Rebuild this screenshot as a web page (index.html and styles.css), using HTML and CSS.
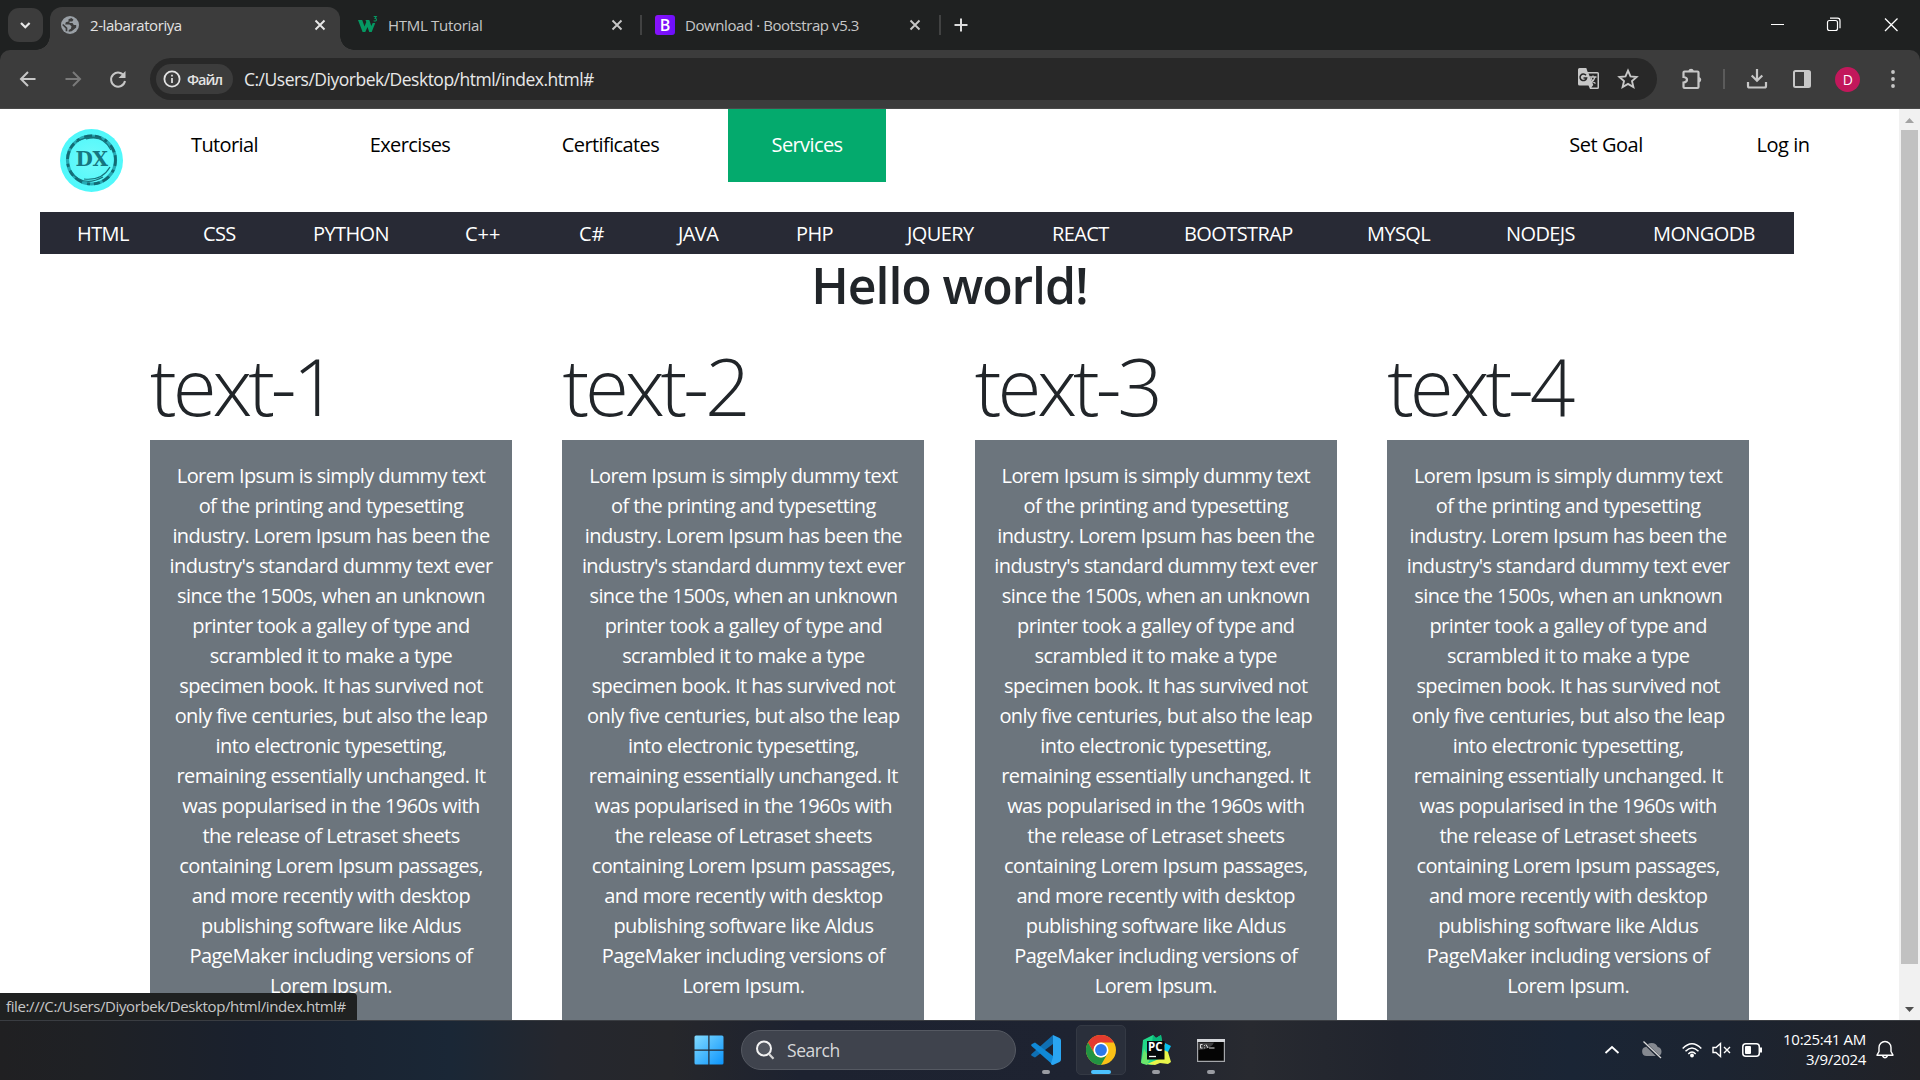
FILE: index.html
```html
<!DOCTYPE html>
<html lang="en">
<head>
<meta charset="utf-8">
<title>2-labaratoriya</title>
<link rel="stylesheet" href="styles.css">
</head>
<body>
<div class="screen">
  <div class="tabstrip">
    <button class="tab-search"><svg width="34" height="34" viewBox="0 0 34 34"><path d="M13 15l4.300 4.300L21.600 15" fill="none" stroke="#e8e8e8" stroke-width="2.200"/></svg></button>
    <div class="tab active">
      <svg class="fav" width="20" height="20" viewBox="0 0 20 20"><circle cx="10" cy="10" r="9" fill="#9aa0a6"/><path d="M11.500 3l-3 1.300v2.200l-2.700.8-.6 2.200h4.300l2 1.800-.6 2.400-2.200 1.400v1.700l3-.5 4.500-3.800v-2.600h-2.400l-1.300-1.800h-3V6.500h2.700l1.300-1.700z" fill="#3c3c3c"/><path d="M2.700 9.500l3.800 3.600v3.200" fill="none" stroke="#3c3c3c" stroke-width="1.700"/></svg>
      <span class="tab-title">2-labaratoriya</span>
      <svg class="close" width="20" height="20" viewBox="0 0 20 20"><path d="M5.500 5.500l9 9m0-9l-9 9" stroke="#e8e8e8" stroke-width="1.900"/></svg>
    </div>
    <div class="tab second">
      <svg class="fav" width="20" height="20" viewBox="0 0 20 20"><path d="M0 5h4.200l2.300 6.500L8.300 7 7.500 5h3.800l2 6 1.400-3h2.600L13.700 17h-2.500L9.500 12 7.300 17H4.600z" fill="#059862"/><path d="M15.700 1.500h2.600L17 3.300q1.700.2 1.500 1.600-.5 1.700-2.900.8" fill="none" stroke="#059862" stroke-width="1.100"/></svg>
      <span class="tab-title">HTML Tutorial</span>
      <svg class="close" width="20" height="20" viewBox="0 0 20 20"><path d="M5.500 5.500l9 9m0-9l-9 9" stroke="#c7c7c7" stroke-width="1.900"/></svg>
    </div>
    <i class="tab-sep"></i>
    <div class="tab third">
      <span class="fav bootstrap">B</span>
      <span class="tab-title">Download · Bootstrap v5.3</span>
      <svg class="close" width="20" height="20" viewBox="0 0 20 20"><path d="M5.500 5.500l9 9m0-9l-9 9" stroke="#c7c7c7" stroke-width="1.900"/></svg>
    </div>
    <i class="tab-sep"></i>
    <svg class="newtab" width="20" height="20" viewBox="0 0 20 20"><path d="M10 3.500v13M3.500 10h13" stroke="#dcdcdc" stroke-width="2"/></svg>
    <div class="window-buttons">
      <svg width="58" height="40" viewBox="0 0 58 40"><path d="M25 19.500h13" stroke="#fff"/></svg>
      <svg width="58" height="40" viewBox="0 0 58 40"><rect x="23.500" y="15.500" width="10" height="10" rx="2" fill="none" stroke="#fff" stroke-width="1.200"/><path d="M26 13.200h7.500q2.500 0 2.500 2.500v7.500" fill="none" stroke="#fff" stroke-width="1.200"/></svg>
      <svg width="58" height="40" viewBox="0 0 58 40"><path d="M23 13.500l12.500 12.500m0-12.500L23 26" stroke="#fff" stroke-width="1.300"/></svg>
    </div>
  </div>

  <div class="toolbar">
    <svg class="nav-icon" width="24" height="24" viewBox="0 0 24 24"><path d="M19.500 12H5.500M12 5l-7 7 7 7" fill="none" stroke="#c7c7c7" stroke-width="2"/></svg>
    <svg class="nav-icon" width="24" height="24" viewBox="0 0 24 24"><path d="M4.500 12h14M12 5l7 7-7 7" fill="none" stroke="#7a7a7a" stroke-width="2"/></svg>
    <svg class="nav-icon" width="24" height="24" viewBox="0 0 24 24"><path d="M18.400 9.500A7 7 0 1 0 19 14" fill="none" stroke="#c7c7c7" stroke-width="2"/><path d="M19.500 4v7h-7z" fill="#c7c7c7"/></svg>
    <div class="omnibox">
      <span class="chip"><svg width="18" height="18" viewBox="0 0 18 18"><circle cx="9" cy="9" r="7.600" fill="none" stroke="#e3e3e3" stroke-width="1.800"/><path d="M9 8v5M9 4.800v1.800" stroke="#e3e3e3" stroke-width="1.700"/></svg><span>Файл</span></span>
      <span class="url">C:/Users/Diyorbek/Desktop/html/index.html#</span>
      <svg class="translate" width="22" height="22" viewBox="0 0 22 22"><path d="M1.500 0h6.800l1.400 4H19.500q1.500 0 1.500 1.500v14q0 1.500-1.500 1.500H12l-1.500-3.500h-9Q0 17.500 0 16V1.500Q0 0 1.500 0z" fill="#c7c7c7"/><path d="M10.500 5.500h9v14h-6.200l2-2.500z" fill="#282828"/><path d="M8 7.300A3.300 3.300 0 1 0 8.600 10H5.500" fill="none" stroke="#282828" stroke-width="1.500"/><path d="M11.500 9h7M15 7.500V9M17 9q-1 4-4.500 6M13 10q1 3.500 4.500 5.500" fill="none" stroke="#c7c7c7" stroke-width="1.300"/></svg>
      <svg width="22" height="22" viewBox="0 0 22 22"><path d="M11 2.700l2.500 5.700 6.100.6-4.600 4.100 1.400 6-5.400-3.200-5.400 3.200 1.400-6L2.400 9l6.100-.6z" fill="none" stroke="#c7c7c7" stroke-width="1.900"/></svg>
    </div>
    <svg class="puzzle" width="24" height="24" viewBox="0 0 24 24"><path d="M3.500 5.500q0-1 1-1h13q1 0 1 1V20q0 1-1 1h-13q-1 0-1-1v-4.500q3.500-.5 3.500-2.800T3.500 10z" fill="none" stroke="#c7c7c7" stroke-width="2.200"/><path d="M8.300 4a2.800 2.800 0 0 1 5.500 0zM19 10a2.800 2.800 0 0 1 0 5.500z" fill="#c7c7c7"/></svg>
    <i class="tool-sep"></i>
    <svg class="download" width="22" height="22" viewBox="0 0 22 22"><path d="M11 1v11M5.700 7.500L11 12.800l5.300-5.300M2 14v4q0 1.500 1.500 1.500h15Q20 19.500 20 18v-4" fill="none" stroke="#c7c7c7" stroke-width="2.200"/></svg>
    <svg class="panel" width="20" height="20" viewBox="0 0 20 20"><rect x="2" y="2" width="16" height="16" rx="1.500" fill="none" stroke="#c7c7c7" stroke-width="2"/><path d="M12 2h6v16h-6z" fill="#c7c7c7"/></svg>
    <span class="avatar">D</span>
    <svg class="dots" width="6" height="20" viewBox="0 0 6 20"><g fill="#c7c7c7"><circle cx="3" cy="3" r="1.900"/><circle cx="3" cy="10" r="1.900"/><circle cx="3" cy="17" r="1.900"/></g></svg>
  </div>

  <div class="viewport">
    <div class="page">
      <header class="header">
        <svg class="logo" width="63" height="63" viewBox="0 0 63 63">
          <defs><radialGradient id="sea"><stop offset="0" stop-color="#72fafa"/><stop offset="1" stop-color="#4ff8fb"/></radialGradient></defs>
          <circle cx="31.500" cy="31.500" r="31.500" fill="url(#sea)"/>
          <g fill="none">
            <ellipse cx="31.500" cy="31" rx="24" ry="24" stroke="#26aab4" stroke-width="3.200"/>
            <ellipse cx="31.500" cy="31" rx="24" ry="24" stroke="#136a74" stroke-width="2.800" stroke-dasharray="6 4 3 5 8 3"/>
            <path d="M26 10q17-5 25 11M10 42q13 17 33 6M24 50q18 2 26-12M16 13q14-8 26-3" stroke="#17737c" stroke-width="1.200"/>
          </g>
          <text x="31.500" y="37" class="logo-text">DX</text>
        </svg>
        <nav class="menu">
          <a class="w155">Tutorial</a><a class="w166">Exercises</a><a class="w185">Certificates</a><a class="w158 current">Services</a>
        </nav>
        <nav class="menu account">
          <a class="w162">Set Goal</a><a class="w142">Log in</a>
        </nav>
      </header>
      <nav class="topics">
        <a>HTML</a><a>CSS</a><a>PYTHON</a><a class="wide">C++</a><a class="wide">C#</a><a>JAVA</a><a>PHP</a><a>JQUERY</a><a>REACT</a><a>BOOTSTRAP</a><a>MYSQL</a><a>NODEJS</a><a>MONGODB</a>
      </nav>
      <h1>Hello world!</h1>
      <main class="columns">
        <section><h2>text-1</h2><p>Lorem Ipsum is simply dummy text<br>of the printing and typesetting<br>industry. Lorem Ipsum has been the<br>industry's standard dummy text ever<br>since the 1500s, when an unknown<br>printer took a galley of type and<br>scrambled it to make a type<br>specimen book. It has survived not<br>only five centuries, but also the leap<br>into electronic typesetting,<br>remaining essentially unchanged. It<br>was popularised in the 1960s with<br>the release of Letraset sheets<br>containing Lorem Ipsum passages,<br>and more recently with desktop<br>publishing software like Aldus<br>PageMaker including versions of<br>Lorem Ipsum.</p></section>
        <section><h2>text-2</h2><p>Lorem Ipsum is simply dummy text<br>of the printing and typesetting<br>industry. Lorem Ipsum has been the<br>industry's standard dummy text ever<br>since the 1500s, when an unknown<br>printer took a galley of type and<br>scrambled it to make a type<br>specimen book. It has survived not<br>only five centuries, but also the leap<br>into electronic typesetting,<br>remaining essentially unchanged. It<br>was popularised in the 1960s with<br>the release of Letraset sheets<br>containing Lorem Ipsum passages,<br>and more recently with desktop<br>publishing software like Aldus<br>PageMaker including versions of<br>Lorem Ipsum.</p></section>
        <section><h2>text-3</h2><p>Lorem Ipsum is simply dummy text<br>of the printing and typesetting<br>industry. Lorem Ipsum has been the<br>industry's standard dummy text ever<br>since the 1500s, when an unknown<br>printer took a galley of type and<br>scrambled it to make a type<br>specimen book. It has survived not<br>only five centuries, but also the leap<br>into electronic typesetting,<br>remaining essentially unchanged. It<br>was popularised in the 1960s with<br>the release of Letraset sheets<br>containing Lorem Ipsum passages,<br>and more recently with desktop<br>publishing software like Aldus<br>PageMaker including versions of<br>Lorem Ipsum.</p></section>
        <section><h2>text-4</h2><p>Lorem Ipsum is simply dummy text<br>of the printing and typesetting<br>industry. Lorem Ipsum has been the<br>industry's standard dummy text ever<br>since the 1500s, when an unknown<br>printer took a galley of type and<br>scrambled it to make a type<br>specimen book. It has survived not<br>only five centuries, but also the leap<br>into electronic typesetting,<br>remaining essentially unchanged. It<br>was popularised in the 1960s with<br>the release of Letraset sheets<br>containing Lorem Ipsum passages,<br>and more recently with desktop<br>publishing software like Aldus<br>PageMaker including versions of<br>Lorem Ipsum.</p></section>
      </main>
    </div>
    <div class="scrollbar">
      <svg width="21" height="21" viewBox="0 0 21 21"><path d="M6 14l4.500-5 4.500 5z" fill="#a3a3a3"/></svg>
      <i class="thumb"></i>
      <svg width="21" height="21" viewBox="0 0 21 21"><path d="M6 8l4.500 5L15 8z" fill="#505050"/></svg>
    </div>
    <div class="status">file:///C:/Users/Diyorbek/Desktop/html/index.html#</div>
  </div>

  <div class="taskbar">
    <svg class="start" width="30" height="30" viewBox="0 0 30 30"><defs><linearGradient id="win" x1="0" y1="0" x2="30" y2="30" gradientUnits="userSpaceOnUse"><stop offset="0" stop-color="#84dcff"/><stop offset="1" stop-color="#0a93fb"/></linearGradient></defs><path d="M2 .5h12.300v14H.5V2Q.5.500 2 .5zM15.500.500H28q1.500 0 1.500 1.500v12.500h-14zM.5 15.700h13.800V29.500H2Q.5 29.500.5 28zM15.500 15.700h14V28q0 1.500-1.500 1.500H15.500z" fill="url(#win)"/></svg>
    <div class="search"><svg width="22" height="22" viewBox="0 0 22 22"><circle cx="10" cy="9.500" r="7" fill="#52565f" stroke="#f2f2f2" stroke-width="2"/><path d="M15 15l4.500 4.800" stroke="#d5d5d5" stroke-width="2.200"/></svg><span>Search</span></div>
    <div class="app"><svg width="30" height="30" viewBox="0 0 30 30"><path d="M22 0v9L4 22.500.6 20.700Q-.3 19.800.8 18.700z" fill="#0f6fb3"/><path d="M22 30v-9L4 7.500.6 9.300Q-.3 10.200.8 11.300z" fill="#1089d6"/><path d="M22 0l6.500 3q1.500.8 1.500 2.500v19q0 1.700-1.500 2.500L22 30q-1 0-2.200-1L22 22z" fill="#2aa5f2"/></svg><i></i></div>
    <div class="app open"><svg width="30" height="30" viewBox="0 0 30 30"><circle cx="15" cy="15" r="15" fill="#fbc116"/><path d="M2 7.500A15 15 0 0 1 28 7.500H15a7.500 7.500 0 0 0-6.500 11.200z" fill="#e33b2e"/><path d="M2 7.500L8.500 18.750A7.500 7.500 0 0 0 21.500 18.750L15 30A15 15 0 0 1 2 7.500z" fill="#229342"/><circle cx="15" cy="15" r="7.500" fill="#fff"/><circle cx="15" cy="15" r="5.900" fill="#2b78ea"/></svg><i></i></div>
    <div class="app"><svg width="30" height="30" viewBox="0 0 30 30"><path d="M2 5l10-5 3 3 5-3 1 6 3 8-9 14-4 2-9-1-2-2z" fill="#21d789"/><path d="M12 0l3 3 5-3 1 8H11z" fill="#09b87b"/><path d="M0 28l3-14 6 10-3 6z" fill="#6be66b"/><path d="M22 9l5 2 0 6 3 10-3 2-8-1-5 2-8-1 14-6z" fill="#e8f54a"/><path d="M24 8l6 3-3 6-4-2z" fill="#07c3f2"/><path d="M6 6h17.500V24.500H6z" fill="#05090a"/><path d="M8 21.500h7" stroke="#fff" stroke-width="1.300"/><text x="7" y="15.500" class="pc">PC</text></svg><i></i></div>
    <div class="app"><svg width="28" height="23" viewBox="0 0 28 23"><path d="M.6.600h26.800v21.800H.6z" fill="#050505" stroke="#a4a6aa" stroke-width="1.200"/><path d="M1 3.500V11q14-1 16-7.500z" fill="#3d3d3f"/><path d="M0 0h28v3H0z" fill="#d4d6da"/><path d="M5.500 5.500h-2v3.500h2M7.500 6v.8M7.500 8.500v.8M9 5.500l2 3.500M12 9h5.500" stroke="#ddd" fill="none"/></svg><i></i></div>
    <div class="tray">
      <svg class="up" width="16" height="10" viewBox="0 0 16 10"><path d="M1.500 8L8 2l6.500 6" fill="none" stroke="#fff" stroke-width="1.800"/></svg>
      <svg class="cloud" width="22" height="18" viewBox="0 0 22 18"><path d="M5.500 15a4.500 4.500 0 0 1-.8-8.900A6.500 6.500 0 0 1 16.700 6a4.600 4.600 0 0 1 .3 9z" fill="#858990"/><path d="M3 1.500L19.500 17.500" stroke="#1b2330" stroke-width="3"/><path d="M2.500.5L20 17" stroke="#ddd" stroke-width="1.200"/></svg>
      <svg class="wifi" width="20" height="16" viewBox="0 0 20 16"><g fill="none" stroke="#fff" stroke-width="1.500"><path d="M.7 6.500q9.300-9.500 18.600 0M3.500 9.300q6.500-6.700 13 0M6.300 12q3.700-3.800 7.400 0"/></g><circle cx="10" cy="13.500" r="1.900" fill="#fff"/></svg>
      <svg class="volume" width="20" height="16" viewBox="0 0 20 16"><path d="M1 5.500h3L8.500 1.500v13L4 10.500H1z" fill="none" stroke="#fff" stroke-width="1.400"/><path d="M12 5l6 6m0-6l-6 6" stroke="#fff" stroke-width="1.400"/></svg>
      <svg class="battery" width="21" height="14" viewBox="0 0 21 14"><rect x=".8" y=".8" width="16.500" height="12.400" rx="3" fill="none" stroke="#fff" stroke-width="1.500"/><rect x="3" y="3" width="6" height="8" rx="1" fill="#fff"/><path d="M19 4.500v5" stroke="#fff" stroke-width="2"/></svg>
      <div class="clock">10:25:41 AM<br>3/9/2024</div>
      <svg class="bell" width="18" height="20" viewBox="0 0 18 20"><path d="M1 15.200l2-3.700V7.500a6 6 0 0 1 12 0v4l2 3.700zM6.500 16q2.500 3.500 5 0" fill="none" stroke="#fff" stroke-width="1.400" stroke-linejoin="round"/></svg>
    </div>
  </div>
</div>
</body>
</html>
```
FILE: styles.css
```css
* { box-sizing: border-box; }
body { margin: 0; font-family: "Open Sans", "Noto Sans", sans-serif; letter-spacing: -0.45px; overflow: hidden; }
svg { display: block; flex: none; }
.screen { width: 1920px; height: 1080px; display: flex; flex-direction: column; background: #1f2121; }

/* Tab strip */
.tabstrip { height: 50px; display: flex; align-items: center; padding-left: 8px; background: #1f2121; }
.tab-search { width: 35px; height: 34px; border: 0; border-radius: 11px; padding: 0; background: #3c3c3c; margin-right: 7px; }
.tab { height: 43px; margin-top: 7px; padding: 0 10px 7px 18px; display: flex; align-items: center; position: relative; color: #c7c7c7; }
.tab.active { width: 290px; padding-left: 10px; background: #3c3c3c; border-radius: 12px 12px 0 0; color: #e3e3e3; }
.tab.active::before, .tab.active::after { content: ""; position: absolute; bottom: 0; width: 14px; height: 14px; }
.tab.active::before { left: -14px; background: radial-gradient(circle at 0 0, transparent 13.500px, #3c3c3c 14px); }
.tab.active::after { right: -14px; background: radial-gradient(circle at 100% 0, transparent 13.500px, #3c3c3c 14px); }
.tab.second { width: 300px; padding-right: 13px; }
.tab.third { width: 297px; padding-left: 13px; padding-right: 14px; }
.tab .fav { margin-right: 10px; }
.bootstrap { width: 20px; height: 20px; border-radius: 3px; background: linear-gradient(100deg, #8b12fb, #6a0ffb); color: #fff; font: 600 16px/20px "Open Sans", sans-serif; text-align: center; letter-spacing: 0; }
.tab-title { font-size: 15px; line-height: 20px; flex: 1; white-space: nowrap; letter-spacing: -0.42px; }
.second .tab-title { letter-spacing: -0.3px; }
.tab-sep { width: 2px; height: 20px; background: #414242; }
.newtab { margin-left: 10px; }
.window-buttons { display: flex; margin-left: auto; height: 50px; align-items: center; }

/* Toolbar */
.toolbar { height: 59px; background: #3c3c3c; border-bottom: 1px solid #4a4a4a; border-radius: 10px 10px 0 0; display: flex; align-items: center; padding-left: 16px; }
.nav-icon { margin-right: 21px; }
.nav-icon + .omnibox { margin-left: -1px; }
.omnibox { width: 1507px; height: 42px; border-radius: 21px; background: #282828; display: flex; align-items: center; padding: 0 18px 0 6px; }
.chip { width: 77px; height: 30px; border-radius: 15px; background: #3c3c3c; display: flex; align-items: center; gap: 6px; padding-left: 7px; color: #e3e3e3; font-weight: 600; font-size: 14.500px; letter-spacing: -1px; }
.url { margin-left: 11px; font-size: 17.500px; color: #e8e8e8; flex: 1; letter-spacing: -0.5px; }
.translate { margin-right: 17px; }
.puzzle { margin-left: 23px; }
.tool-sep { width: 2px; height: 20px; margin: 0 21px 0 19px; background: #5b5b5b; }
.panel { margin-left: 24px; }
.avatar { width: 25px; height: 25px; margin: 0 30px 0 23px; border-radius: 50%; background: #c2185b; color: #fff; font-size: 14px; line-height: 25px; text-align: center; }

/* Web page */
.viewport { height: 911px; display: flex; position: relative; overflow: hidden; background: #fff; }
.page { width: 1899px; flex: none; }
.header { height: 103px; display: flex; padding: 0 45px 0 60px; }
.logo { margin: 20px 24px 0 0; }
.logo-text { font: 700 20px "DejaVu Serif", serif; text-anchor: middle; fill: #167580; letter-spacing: -0.5px; }
.menu { display: flex; gap: 25px; font-size: 20px; letter-spacing: -0.6px; }
.menu a { height: 73px; padding-top: 21px; line-height: 30px; text-align: center; color: #000; }
.menu .current { background: #04aa6d; color: #fff; }
.account { margin-left: auto; letter-spacing: -0.45px; }
.w155 { width: 155px; } .w166 { width: 166px; } .w185 { width: 185px; } .w158 { width: 158px; }
.w162 { width: 162px; } .w142 { width: 142px; }
.topics { width: 1754px; height: 42px; margin-left: 40px; padding: 1px 0 0 37px; background: #282a35; color: #fff; display: grid; grid-template-columns: 126px 110px 152px 114px 99px 118px 111px 145px 132px 183px 139px 147px 110px; font-size: 20px; line-height: 42px; letter-spacing: -0.6px; }
.topics .wide { letter-spacing: 0; }
h1 { margin: 0; padding-top: 1px; height: 83px; font-size: 50px; line-height: 60px; font-weight: 600; text-align: center; color: #212529; letter-spacing: -1.100px; }
.columns { display: grid; grid-template-columns: repeat(4, 362px); column-gap: 50.400px; margin-left: 150px; }
h2 { margin: 0 0 7px; font-size: 80px; line-height: 96px; font-weight: 300; color: #212529; letter-spacing: -4.100px; }
.columns p { margin: 0; height: 600px; padding-top: 21px; background: #6c757d; color: #fff; font-size: 20px; line-height: 30px; text-align: center; white-space: nowrap; letter-spacing: -0.58px; }
.scrollbar { width: 21px; background: #f1f1f1; display: flex; flex-direction: column; align-items: center; }
.thumb { width: 17px; height: 834px; margin-bottom: auto; background: #c1c1c1; }
.status { position: absolute; left: 0; bottom: 0; width: 357px; height: 27px; padding-left: 6px; background: #1f2121; border-radius: 0 4px 0 0; color: #c7c7c7; font-size: 15px; line-height: 27px; letter-spacing: -0.390px; white-space: nowrap; }

/* Taskbar */
.taskbar { height: 60px; border-top: 1px solid #3a3d42; display: flex; align-items: center; padding: 0 0 1px 694px; color: #fff; background: linear-gradient(90deg, #202022 0, #1f2125 90px, #1a212e 250px, #1a2736 450px, #25272e 560px, #26272b 670px, #1d2230 800px, #1e2331 1080px, #282a30 1250px, #20242e 1400px, #1a2535 1570px, #1c2431 1720px, #212227 1920px); }
.search { width: 275px; height: 40px; margin: 0 5px 0 17px; border-radius: 20px; background: #3f434d; border: 1px solid #555962; display: flex; align-items: center; padding-left: 12px; gap: 11px; font-size: 17.500px; color: #d7d8da; }
.app { width: 50px; height: 50px; margin-right: 5px; border-radius: 5px; display: flex; align-items: center; justify-content: center; position: relative; border: 1px solid transparent; }
.app.open { background: #2a2f3b; border-color: #343944; }
.app i { position: absolute; bottom: 0; width: 8px; height: 4px; border-radius: 2px; background: #9a9ca2; }
.app.open i { width: 20px; background: #4cc2ff; }
.pc { font: 700 11.500px "Open Sans", sans-serif; fill: #fff; letter-spacing: 0; }
.tray { margin-left: auto; display: flex; align-items: center; padding-right: 26px; }
.cloud { margin-left: 21px; }
.wifi { margin-left: 19px; }
.volume { margin-left: 10px; }
.battery { margin-left: 10px; }
.clock { width: 103px; padding-bottom: 2px; text-align: right; font-size: 15px; line-height: 20px; letter-spacing: -0.300px; }
.bell { margin-left: 10px; }
```
